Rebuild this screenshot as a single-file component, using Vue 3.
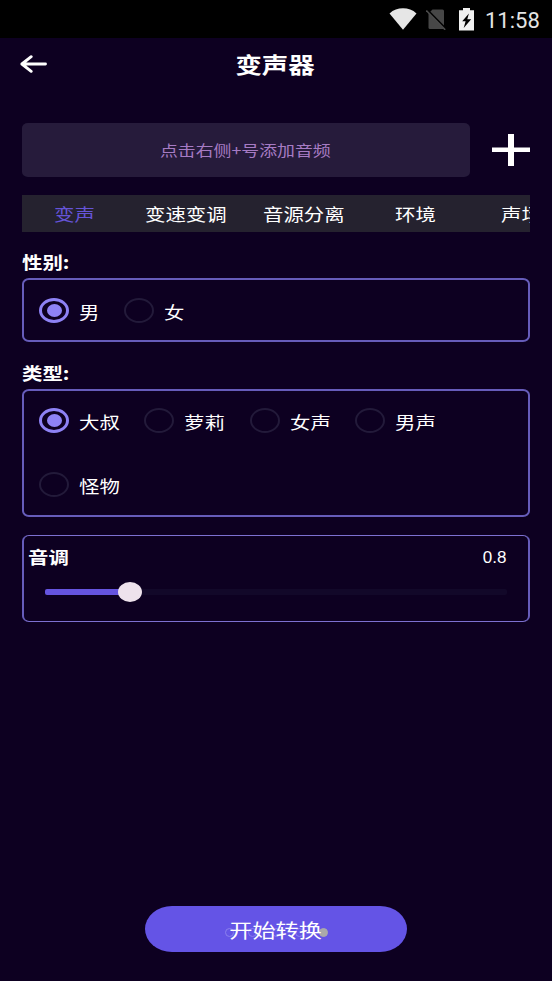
<script setup>
import { ref, computed } from 'vue'

const tabs = [
  { name: '变声', width: 91.5 },
  { name: '变速变调', width: 118 },
  { name: '音源分离', width: 132 },
  { name: '环境', width: 106 },
  { name: '声场', width: 60 },
]
const activeTab = ref('变声')
const genders = ['男', '女']
const gender = ref('男')
const kinds = ['大叔', '萝莉', '女声', '男声', '怪物']
const kind = ref('大叔')
const pitch = ref(0.8)
const percent = computed(() => (18.5 * pitch.value) / 0.8 + '%')
</script>

<template>
  <div class="screen">
    <div class="status">
      <svg class="wifi" viewBox="0 0 28 22"><path d="M0.5 5.4C4.3 2 9 0.3 14 0.3S23.7 2 27.5 5.4L14 21.8Z" /></svg>
      <svg class="sim" viewBox="0 0 20 21">
        <path d="M6.5 0.5H16.500Q18 0.500 18 2V20H4Q2.500 20 2.500 18.500V4.500Z" fill="#474747" />
        <path d="M0.700 0.300L20.300 20.200" stroke="#000" stroke-width="2" />
        <path d="M0.300 1.500L19.200 20.800" stroke="#4b4b4b" stroke-width="1.600" />
      </svg>
      <svg class="battery" viewBox="0 0 15 23">
        <path d="M4 0H11V2.300H15V22.500H0V2.300H4Z" fill="#f1f1f1" />
        <path d="M9.900 5.500L3.200 13.200H6.600L4.700 19.900L12.200 11.200H8.300Z" fill="#000" />
      </svg>
      <span class="clock">11:58</span>
    </div>

    <header class="head">
      <svg class="back" viewBox="0 0 27 18"><path d="M11.200 1.700L1.900 9L11.200 16.300M1.900 9H25.500" /></svg>
      <h1 class="title"><span class="wide mid">变声器</span></h1>
    </header>

    <div class="source">
      <div class="field"><span class="wide mid hint">点击右侧+号添加音频</span></div>
      <svg class="plus" viewBox="0 0 38 32"><path d="M16 0H22V13.500H38V18H22V32H16V18H0V13.500H16Z" /></svg>
    </div>

    <nav class="tabs">
      <div v-for="t in tabs" :key="t.name" class="tab" :class="{ active: t.name === activeTab }" :style="{ width: t.width + 'px' }" @click="activeTab = t.name">
        <span class="wide">{{ t.name }}</span>
      </div>
    </nav>

    <h2 class="label"><span class="wide">性别:</span></h2>
    <div class="panel single">
      <div v-for="g in genders" :key="g" class="option short" @click="gender = g">
        <i class="radio" :class="{ on: g === gender }"></i><span class="wide">{{ g }}</span>
      </div>
    </div>

    <h2 class="label second"><span class="wide">类型:</span></h2>
    <div class="panel double">
      <div v-for="k in kinds" :key="k" class="option" @click="kind = k">
        <i class="radio" :class="{ on: k === kind }"></i><span class="wide">{{ k }}</span>
      </div>
    </div>

    <div class="tone">
      <div class="tonehead"><b class="wide">音调</b><span class="value">{{ pitch }}</span></div>
      <div class="track"><div class="fill" :style="{ width: percent }"><i class="thumb"></i></div></div>
    </div>

    <button class="start">
      <span class="dots"><i v-for="n in 5" :key="n"></i></span>
      <span class="wide mid">开始转换</span>
    </button>
  </div>
</template>

<style>
body { margin: 0; background: #0d0021; }
</style>

<style scoped>
.screen {
  width: 552px; height: 981px; overflow: hidden; box-sizing: border-box;
  display: flex; flex-direction: column; background: #0d0021; color: #fff;
  font-family: "Noto Sans CJK SC", sans-serif; font-size: 17px;
}
.wide { display: inline-block; white-space: nowrap; transform: scaleX(1.2); transform-origin: left center; }
.mid { transform-origin: center; }
.hint { transform: scaleX(1.25); }
.status { height: 38px; flex: none; background: #000; display: flex; align-items: flex-start; padding-left: 388.500px; }
.wifi { width: 28px; height: 22px; margin-top: 8px; fill: #e6e6e6; }
.sim { width: 20px; height: 21px; margin: 9px 0 0 9px; }
.battery { width: 15px; height: 23px; margin: 8px 0 0 13.500px; }
.clock { font: 22px/26px Roboto, sans-serif; color: #e4e4e4; margin: 8px 0 0 11px; }
.head { height: 52px; flex: none; display: flex; align-items: center; padding-left: 20px; }
.back { width: 27px; height: 18px; fill: none; stroke: #fff; stroke-width: 2.900; stroke-linecap: round; stroke-linejoin: round; }
.title { margin: 0 48px 2px 0; flex: 1; text-align: center; font-size: 22px; line-height: 32px; font-weight: 700; }
.source { display: flex; align-items: center; gap: 22.500px; margin: 33px 0 0 21.500px; flex: none; }
.field { box-sizing: border-box; width: 448px; height: 54px; padding-bottom: 2px; border-radius: 6px/5px; background: #261b3b; color: #a67bc4; font-size: 14.300px; display: flex; align-items: center; justify-content: center; }
.plus { width: 38px; height: 32px; fill: #fff; }
.tabs { box-sizing: border-box; display: flex; align-items: center; overflow: hidden; flex: none; width: 508.500px; height: 36.500px; margin: 18px 0 0 21.500px; padding: 2px 0 0 32px; background: #25222f; }
.tab { flex: none; line-height: 24px; }
.active { color: #6554d8; }
.label { margin: 18.500px 0 0 21.500px; height: 24px; line-height: 24px; font-size: 17px; font-weight: 700; flex: none; }
.second { margin-top: 18.500px; }
.panel, .tone { box-sizing: border-box; width: 508.500px; margin-left: 21.500px; flex: none; border: 2px solid #665cba; border-radius: 7px/6px; }
.panel { display: flex; flex-wrap: wrap; align-content: flex-start; margin-top: 4px; padding-left: 15.500px; }
.single { height: 64px; margin-bottom: 0.500px; }
.double { height: 127.500px; padding-right: 60px; }
.option { width: 105.400px; height: 63.500px; margin-top: -1.500px; margin-bottom: 1.500px; display: flex; align-items: center; gap: 10px; }
.double .option { margin-top: -2px; margin-bottom: 2px; }
.option .wide { padding-top: 2px; }
.short { width: 85px; }
.radio { box-sizing: border-box; width: 30px; height: 25px; border: 2px solid #231a3a; border-radius: 50%; display: grid; place-items: center; }
.radio.on { border: 3px solid #8e82f5; }
.radio.on::after { content: ""; width: 15px; height: 13px; border-radius: 50%; background: #8e82f5; }
.double { align-content: flex-start; row-gap: 0; }
.tone { height: 86.500px; margin-top: 18.500px; border-width: 1px 2px; border-color: #7c70d0 #665cba; }
.tonehead { display: flex; justify-content: space-between; align-items: center; height: 24px; padding: 10px 21.500px 0 4px; }
.tonehead b { margin-top: -3px; }
.value { font: 17px/20px "Liberation Sans", sans-serif; }
.track { width: 461.500px; height: 5.500px; margin: 19px 0 0 21.500px; border-radius: 2px; background: #120829; }
.fill { height: 100%; border-radius: 2px 0 0 2px; background: #6554df; display: flex; align-items: center; justify-content: flex-end; }
.thumb { flex: none; width: 24px; height: 20px; margin-right: -12px; border-radius: 50%; background: #eee2ec; }
.start { position: relative; width: 262px; height: 46px; margin: auto 0 29px 145px; padding: 1px 0 0; border: 0; border-radius: 27px/23px; background: #6454e6; color: #fff; font-family: inherit; font-size: 19.300px; flex: none; }
.dots { position: absolute; left: 79.500px; top: 21.500px; display: flex; gap: 14.500px; }
.dots i { box-sizing: border-box; width: 9px; height: 9px; border: 1px solid #8b80ee; border-radius: 50%; }
.dots i:last-child { background: #aaa; border-color: #aaa; }
.start .wide { position: relative; }
</style>
